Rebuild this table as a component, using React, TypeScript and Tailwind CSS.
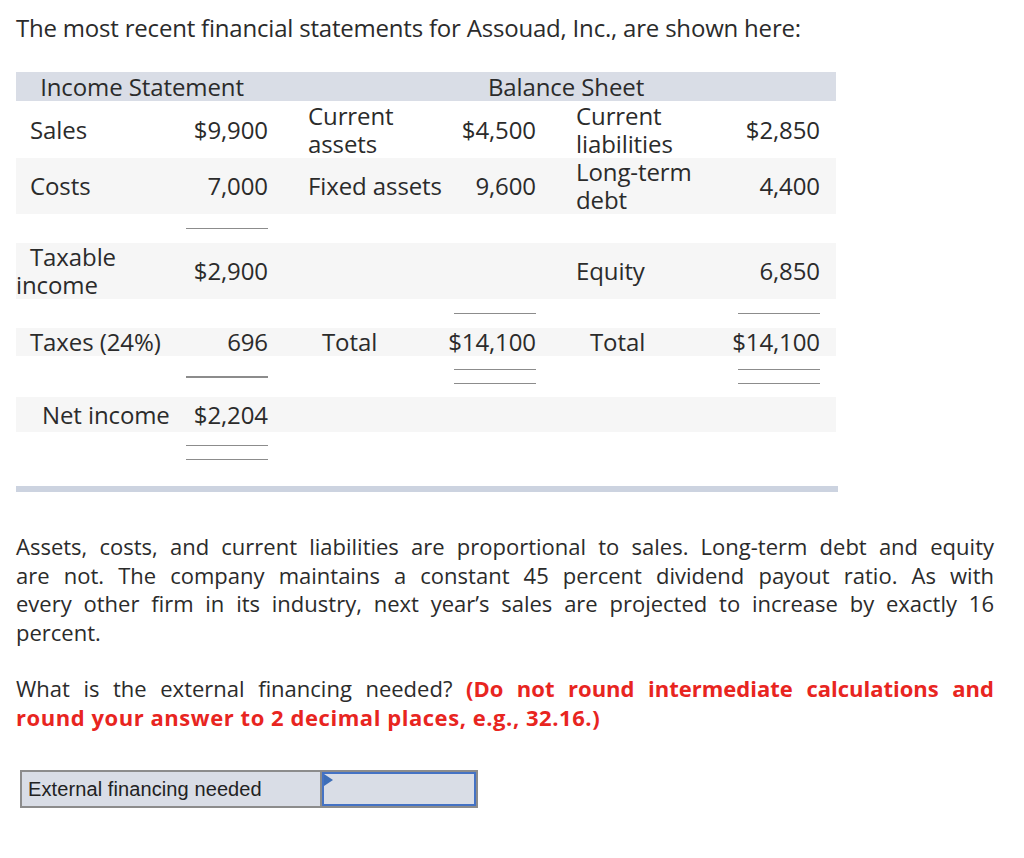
import React from "react";

const cols = "grid grid-cols-[162px_106px_164px_104px_160px_124px]";

function Line({ double = false }: { double?: boolean }) {
  return (
    <div className="flex flex-col items-end pr-[16px]">
      <div className="h-[1.5px] w-[82px] bg-[#8c8c8c]" />
      {double && <div className="mt-[12.5px] h-[1.5px] w-[82px] bg-[#8c8c8c]" />}
    </div>
  );
}

function JLine({ children, last = false }: { children: React.ReactNode; last?: boolean }) {
  return (
    <div className={last ? "whitespace-nowrap" : "whitespace-nowrap text-justify [text-align-last:justify]"}>
      {children}
    </div>
  );
}

export default function App() {
  return (
    <div
      className="min-h-[858px] bg-white text-[#2b2b2b]"
      style={{ fontFamily: "'Open Sans', 'Noto Sans', sans-serif" }}
    >
      <div className="px-[16px] pt-[14px]">
        <p className="text-[24px] leading-[28px] tracking-[-0.2px]">
          The most recent financial statements for Assouad, Inc., are shown here:
        </p>

        <div className="mt-[30px] w-[820px] text-[24px] leading-[28px] tracking-[-0.1px]">
          {/* header */}
          <div className={`${cols} h-[29px] items-center bg-[#d9dde6]`}>
            <div className="col-span-2 pr-[16px] text-center">Income Statement</div>
            <div className="col-span-4 pl-[12px] text-center">Balance Sheet</div>
          </div>
          {/* row 1 */}
          <div className={`${cols} h-[57px] items-center bg-white`}>
            <div className="pl-[14px]">Sales</div>
            <div className="pr-[16px] text-right">$9,900</div>
            <div className="pl-[24px]">Current<br />assets</div>
            <div className="pr-[16px] text-right">$4,500</div>
            <div className="pl-[24px]">Current<br />liabilities</div>
            <div className="pr-[16px] text-right">$2,850</div>
          </div>
          {/* row 2 */}
          <div className={`${cols} h-[56px] items-center bg-[#f6f6f6]`}>
            <div className="pl-[14px]">Costs</div>
            <div className="pr-[16px] text-right">7,000</div>
            <div className="pl-[24px] whitespace-nowrap">Fixed assets</div>
            <div className="pr-[16px] text-right">9,600</div>
            <div className="pl-[24px]">Long-term<br />debt</div>
            <div className="pr-[16px] text-right">4,400</div>
          </div>
          {/* spacer */}
          <div className={`${cols} h-[29px] items-center`}>
            <div />
            <Line />
          </div>
          {/* row 3 */}
          <div className={`${cols} h-[56px] items-center bg-[#f6f6f6]`}>
            <div className="indent-[14px]">Taxable<br />income</div>
            <div className="pr-[16px] text-right">$2,900</div>
            <div />
            <div />
            <div className="pl-[24px]">Equity</div>
            <div className="pr-[16px] text-right">6,850</div>
          </div>
          {/* spacer */}
          <div className={`${cols} h-[29px] items-center`}>
            <div />
            <div />
            <div />
            <Line />
            <div />
            <Line />
          </div>
          {/* row 4 */}
          <div className={`${cols} h-[28px] items-center bg-[#f6f6f6]`}>
            <div className="pl-[14px] whitespace-nowrap">Taxes (24%)</div>
            <div className="pr-[16px] text-right">696</div>
            <div className="pl-[38px]">Total</div>
            <div className="pr-[16px] text-right">$14,100</div>
            <div className="pl-[38px]">Total</div>
            <div className="pr-[16px] text-right">$14,100</div>
          </div>
          {/* spacer */}
          <div className={`${cols} h-[41px] items-center`}>
            <div />
            <div className="pt-[1px]"><Line /></div>
            <div />
            <Line double />
            <div />
            <Line double />
          </div>
          {/* row 5 */}
          <div className={`${cols} h-[35px] items-center bg-[#f6f6f6]`}>
            <div className="pl-[26px] whitespace-nowrap">Net income</div>
            <div className="pr-[16px] text-right">$2,204</div>
          </div>
          {/* bottom lines */}
          <div className={`${cols} pt-[12.5px]`}>
            <div />
            <Line double />
          </div>
        </div>

        <div className="mt-[26px] h-[6px] w-[822px] bg-[#ccd3e0]" />

        <div className="mt-[40px] w-[978px] text-[22px] leading-[28.5px]">
          <JLine>Assets, costs, and current liabilities are proportional to sales. Long-term debt and equity</JLine>
          <JLine>are not. The company maintains a constant 45 percent dividend payout ratio. As with</JLine>
          <JLine>every other firm in its industry, next year’s sales are projected to increase by exactly 16</JLine>
          <JLine last>percent.</JLine>
        </div>

        <div className="mt-[28px] w-[978px] text-[22px] leading-[28.5px]">
          <JLine>
            What is the external financing needed?{" "}
            <span className="font-bold text-[#e8251f]">(Do not round intermediate calculations and</span>
          </JLine>
          <JLine last>
            <span className="font-bold tracking-[0.55px] text-[#e8251f]">round your answer to 2 decimal places, e.g., 32.16.)</span>
          </JLine>
        </div>

        <div
          className="ml-[4px] mt-[39px] flex h-[38px] w-[458px] border-2 border-[#8c8c8c] bg-[#d9dde6]"
          style={{ fontFamily: "'Liberation Sans', Arial, sans-serif" }}
        >
          <div className="flex w-[300px] items-center border-r-2 border-[#8c8c8c] pl-[6px] text-[20px] tracking-[0.1px] text-[#222]">
            External financing needed
          </div>
          <div className="relative flex-1 border-2 border-[#4472c4] bg-[#d9dde6]">
            <div className="absolute left-0 top-0 h-0 w-0 border-y-[6px] border-l-[9px] border-y-transparent border-l-[#3d6eb8]" />
          </div>
        </div>
      </div>
    </div>
  );
}
